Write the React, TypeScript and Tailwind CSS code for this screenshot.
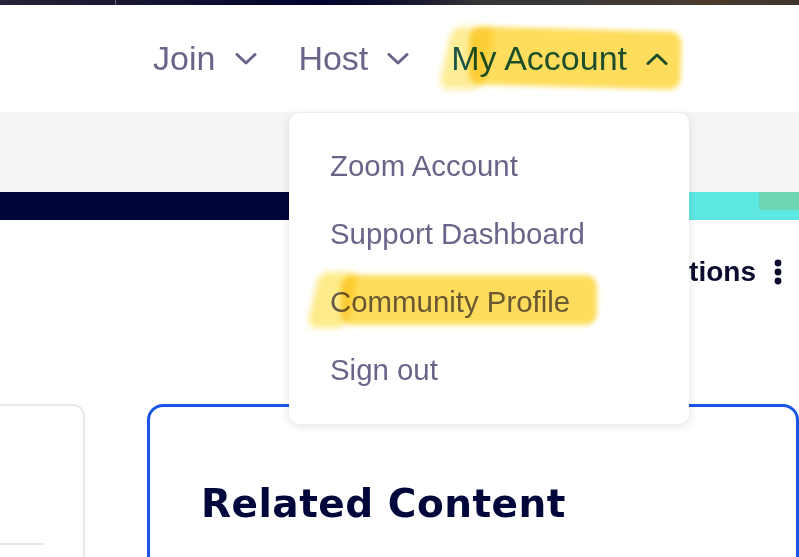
import React from "react";

const Chevron = ({ up = false, color }: { up?: boolean; color: string }) => (
  <svg width="22" height="12" viewBox="0 0 22 12" fill="none" className="shrink-0">
    <path
      d={up ? "M2 10.5 L11 2 L20 10.5" : "M2 1.5 L11 10 L20 1.5"}
      stroke={color}
      strokeWidth="3"
      strokeLinecap="round"
      strokeLinejoin="round"
    />
  </svg>
);

const Kebab = () => (
  <svg width="8" height="26" viewBox="0 0 8 26" className="shrink-0">
    <circle cx="4" cy="4" r="3.4" fill="#0b0b2e" />
    <circle cx="4" cy="13" r="3.4" fill="#0b0b2e" />
    <circle cx="4" cy="22" r="3.4" fill="#0b0b2e" />
  </svg>
);

const menuItems = ["Zoom Account", "Support Dashboard", "Community Profile", "Sign out"];

export default function App() {
  return (
    <div className="relative h-[557px] w-[799px] overflow-hidden bg-white font-['Liberation_Sans',Arial,sans-serif]">
      {/* top strip */}
      <div className="relative h-[5px] bg-[linear-gradient(90deg,#26243a_0%,#141331_20%,#02022e_40%,#12122e_50%,#363638_60%,#3a3838_72%,#4a3a2c_88%,#40352c_100%)]">
        <div className="absolute left-[115px] top-0 h-full w-px bg-[#6a6a7a]" />
      </div>

      {/* header nav */}
      <header className="flex h-[107px] items-center pl-[153px]">
        <div className="flex items-center gap-[20px] text-[34px] text-[#6b6489]">
          <span>Join</span>
          <Chevron color="#6b6489" />
        </div>
        <div className="ml-[41px] flex items-center gap-[19px] text-[34px] text-[#6b6489]">
          <span>Host</span>
          <Chevron color="#6b6489" />
        </div>
        <div className="relative ml-[42px] flex items-center gap-[19px] text-[34px] text-[#1c5a76]">
          <span>My Account</span>
          <Chevron up color="#1c5a76" />
          <div className="pointer-events-none absolute left-[-6px] top-[-6px] h-[62px] w-[44px] -skew-x-12 rounded-[10px] bg-[#fde774] opacity-75 mix-blend-multiply blur-[3px]" />
          <div className="pointer-events-none absolute left-[18px] top-[-4px] h-[58px] w-[212px] rotate-[1.5deg] rounded-[12px] bg-[#fedd5c] mix-blend-multiply blur-[2.5px]" />
        </div>
      </header>

      {/* gray band */}
      <div className="h-[80px] bg-[#f4f5f7]" />

      {/* banner strip */}
      <div className="flex h-[28px]">
        <div className="flex-1 bg-[#00053a]" />
        <div className="relative w-[170px] bg-[#5ee8e3]">
          <div className="absolute right-0 top-0 h-[18px] w-[40px] bg-[#72cfa8] opacity-80" />
        </div>
      </div>

      {/* options row */}
      <div className="flex h-[184px] items-start justify-end pr-[17px] pt-[31px]">
        <div className="flex items-center gap-[18px]">
          <span className="text-[28px] font-bold text-[#0b0b2e]">Options</span>
          <Kebab />
        </div>
      </div>

      {/* cards */}
      <div className="flex items-start">
        <div className="ml-[-20px] h-[200px] w-[105px] rounded-[12px] border-2 border-[#e8e8e8] pt-[137px]">
          <div className="h-[2px] w-[62px] bg-[#e6e6e6]" />
        </div>
        <div className="ml-[62px] h-[200px] flex-1 rounded-[16px] border-[3px] border-[#1a56e6] pl-[51px] pt-[74px]">
          <h2 className="font-['DejaVu_Sans',sans-serif] text-[39px] font-bold leading-[46px] tracking-[0.5px] text-[#00053a]">
            Related Content
          </h2>
        </div>
      </div>

      {/* dropdown */}
      <div className="absolute left-[289px] top-[113px] h-[311px] w-[400px] rounded-[10px] bg-white pt-[19px] shadow-[0_2px_10px_rgba(0,0,0,0.12)]">
        {menuItems.map((item) => (
          <div key={item} className="relative flex h-[68px] items-center pl-[41px] text-[29.4px] text-[#6b6489]">
            <span>{item}</span>
            {item === "Community Profile" && (
              <>
                <div className="pointer-events-none absolute left-[24px] top-[4px] h-[56px] w-[40px] -skew-x-12 rounded-[10px] bg-[#fde774] opacity-85 mix-blend-multiply blur-[3px]" />
                <div className="pointer-events-none absolute left-[52px] top-[7px] h-[50px] w-[256px] rounded-[12px] bg-[#fedd5c] mix-blend-multiply blur-[2.5px]" />
              </>
            )}
          </div>
        ))}
      </div>
    </div>
  );
}
